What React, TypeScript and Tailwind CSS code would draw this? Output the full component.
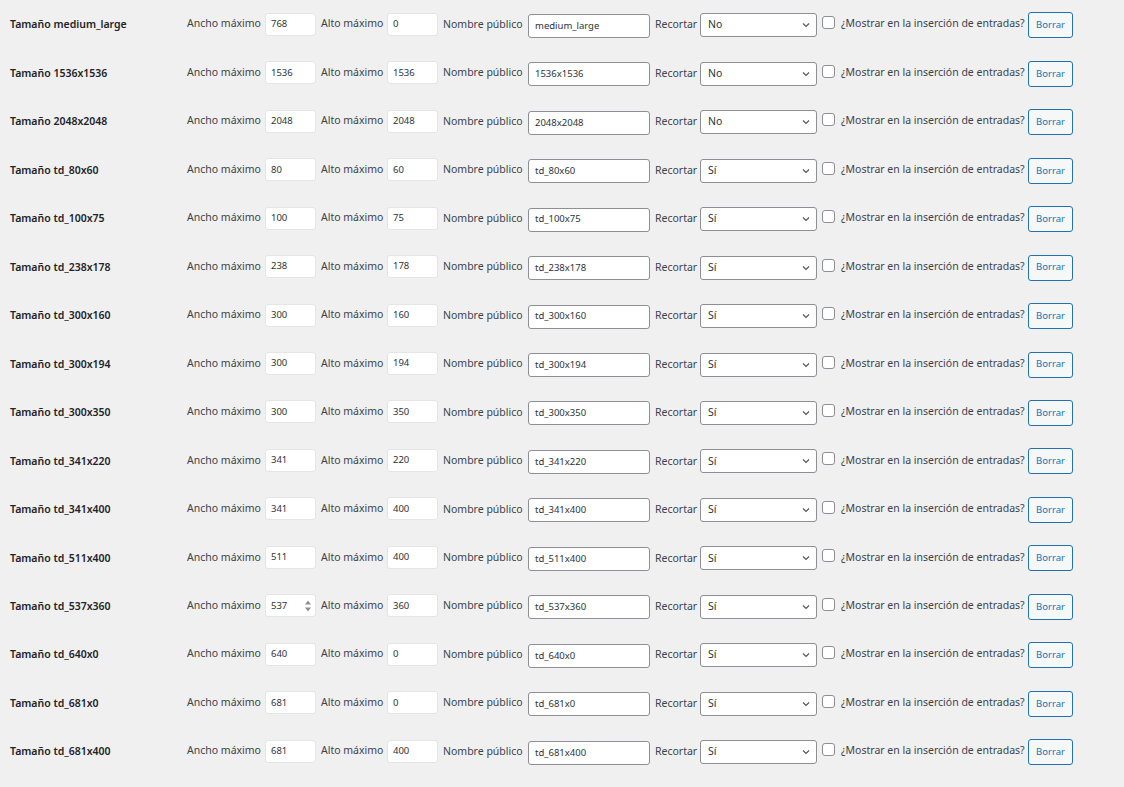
import React from 'react';

type Row = { name: string; w: string; h: string; crop: 'No' | 'Sí' };

const rows: Row[] = [
  { name: 'medium_large', w: '768', h: '0', crop: 'No' },
  { name: '1536x1536', w: '1536', h: '1536', crop: 'No' },
  { name: '2048x2048', w: '2048', h: '2048', crop: 'No' },
  { name: 'td_80x60', w: '80', h: '60', crop: 'Sí' },
  { name: 'td_100x75', w: '100', h: '75', crop: 'Sí' },
  { name: 'td_238x178', w: '238', h: '178', crop: 'Sí' },
  { name: 'td_300x160', w: '300', h: '160', crop: 'Sí' },
  { name: 'td_300x194', w: '300', h: '194', crop: 'Sí' },
  { name: 'td_300x350', w: '300', h: '350', crop: 'Sí' },
  { name: 'td_341x220', w: '341', h: '220', crop: 'Sí' },
  { name: 'td_341x400', w: '341', h: '400', crop: 'Sí' },
  { name: 'td_511x400', w: '511', h: '400', crop: 'Sí' },
  { name: 'td_537x360', w: '537', h: '360', crop: 'Sí' },
  { name: 'td_640x0', w: '640', h: '0', crop: 'Sí' },
  { name: 'td_681x0', w: '681', h: '0', crop: 'Sí' },
  { name: 'td_681x400', w: '681', h: '400', crop: 'Sí' },
];

function NumberBox({ value, spinner }: { value: string; spinner?: boolean }) {
  return (
    <div className="relative shrink-0 w-[51px] h-[23px] bg-white rounded-[3px] border border-[#e4e5e7] flex items-center pl-[5px] text-[9.5px] text-[#2c3338]">
      {value}
      {spinner && (
        <svg className="absolute right-[2px] top-[3px]" width="10" height="16" viewBox="0 0 10 16">
          <path d="M2 6.5 L5 2.5 L8 6.5 Z" fill="#8c8f94" />
          <path d="M2 9.5 L5 13.5 L8 9.5 Z" fill="#8c8f94" />
        </svg>
      )}
    </div>
  );
}

function SizeRow({ row, idx }: { row: Row; idx: number }) {
  return (
    <div className="h-[48.47px] flex items-center whitespace-nowrap text-[10.5px] text-[#3c434a]">
      <div className="shrink-0 w-[187px] pl-[10px] pt-[2px] font-semibold text-[#1d2327]">Tamaño {row.name}</div>
      <span className="shrink-0 w-[78px]">Ancho máximo</span>
      <NumberBox value={row.w} spinner={idx === 12} />
      <span className="shrink-0 w-[71px] pl-[5px]">Alto máximo</span>
      <NumberBox value={row.h} />
      <span className="shrink-0 w-[90px] pl-[5px] pt-[1px]">Nombre público</span>
      <div className="shrink-0 w-[122px] h-[24px] mt-[3px] bg-white rounded-[3px] border border-[#8c8f94] flex items-center pl-[6px] text-[9.5px] text-[#2c3338]">
        {row.name}
      </div>
      <span className="shrink-0 w-[50px] pl-[5px] mt-[2px]">Recortar</span>
      <div className="shrink-0 w-[117px] h-[24px] mt-[2px] bg-white rounded-[3px] border border-[#8c8f94] flex items-center justify-between pl-[7px] pr-[5px] text-[10.5px] text-[#2c3338]">
        <span>{row.crop}</span>
        <svg width="10" height="10" viewBox="0 0 10 10">
          <path d="M2 3.5 L5 6.5 L8 3.5" fill="none" stroke="#50575e" strokeWidth="1.2" />
        </svg>
      </div>
      <div className="shrink-0 ml-[5px] w-[13px] h-[13px] -mt-[3px] bg-white rounded-[3px] border border-[#8c8f94]" />
      <span className="shrink-0 w-[193px] pl-[6px]">¿Mostrar en la inserción de entradas?</span>
      <button className="shrink-0 w-[45px] h-[26px] mt-[2px] rounded-[3px] border border-[#2271b1] bg-[#f6f7f7] text-[#2271b1] text-[9.5px]">
        Borrar
      </button>
    </div>
  );
}

export default function App() {
  return (
    <div className="w-[1124px] h-[787px] bg-[#f0f0f1] overflow-hidden font-['Noto_Sans','Open_Sans',sans-serif]">
      {rows.map((r, i) => (
        <SizeRow key={r.name} row={r} idx={i} />
      ))}
    </div>
  );
}
